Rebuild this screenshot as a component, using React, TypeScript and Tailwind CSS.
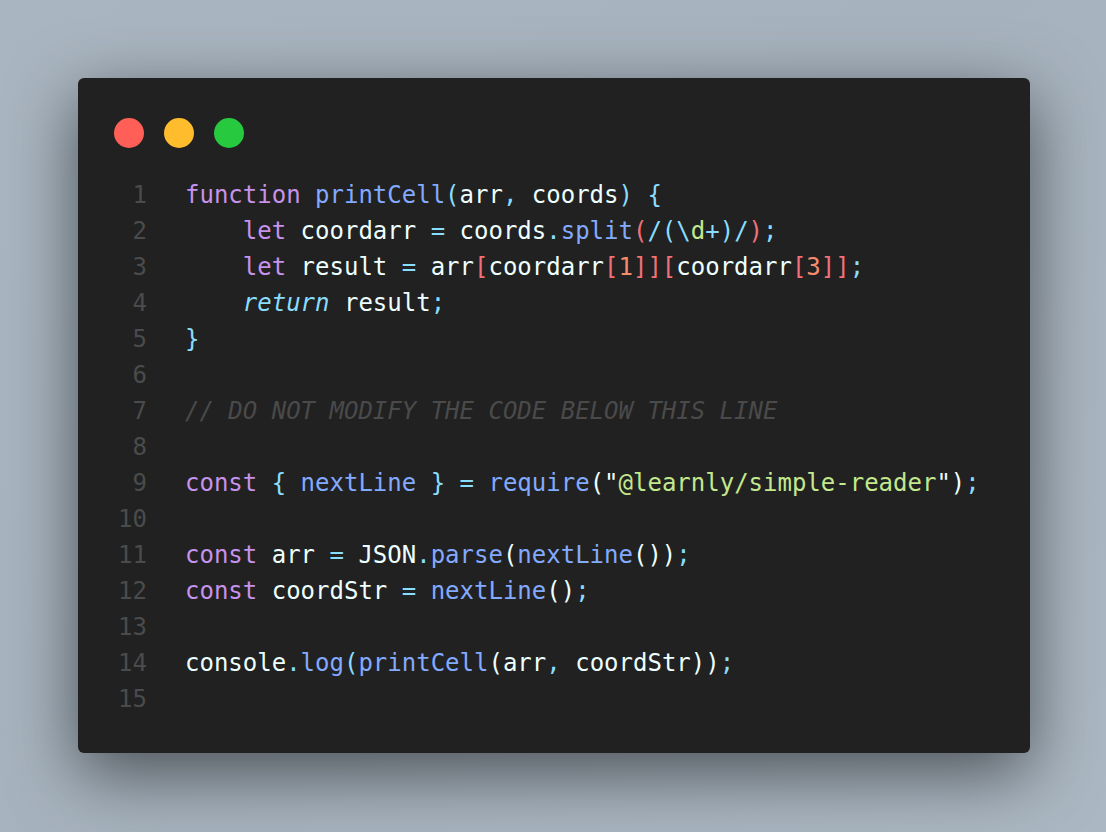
type Tok = [string, string];

const P = "text-[#c792ea]";
const B = "text-[#82aaff]";
const C = "text-[#89ddff]";
const W = "text-[#eeffff]";
const R = "text-[#f07178]";
const O = "text-[#f78c6c]";
const G = "text-[#c3e88d]";
const I = "text-[#89ddff] italic";
const M = "text-[#4a4a4a] italic";

const lines: Tok[][] = [
    [["function", P], [" ", W], ["printCell", B], ["(", C], ["arr", W], [",", C], [" coords", W], [")", C], [" ", W], ["{", C]],
    [["    ", W], ["let", P], [" coordarr ", W], ["=", C], [" coords", W], [".", C], ["split", B], ["(", R], ["/(\\", C], ["d", G], ["+)/", C], [")", R], [";", C]],
    [["    ", W], ["let", P], [" result ", W], ["=", C], [" arr", W], ["[", R], ["coordarr", W], ["[", R], ["1", O], ["]]", R], ["[", R], ["coordarr", W], ["[", R], ["3", O], ["]]", R], [";", C]],
    [["    ", W], ["return", I], [" result", W], [";", C]],
    [["}", C]],
    [],
    [["// DO NOT MODIFY THE CODE BELOW THIS LINE", M]],
    [],
    [["const", P], [" ", W], ["{", C], [" nextLine ", B], ["}", C], [" ", W], ["=", C], [" ", W], ["require", B], ["(\"", W], ["@learnly/simple-reader", G], ["\")", W], [";", C]],
    [],
    [["const", P], [" arr ", W], ["=", C], [" JSON", W], [".", C], ["parse", B], ["(", W], ["nextLine", B], ["())", W], [";", C]],
    [["const", P], [" coordStr ", W], ["=", C], [" ", W], ["nextLine", B], ["()", W], [";", C]],
    [],
    [["console", W], [".", C], ["log", B], ["(", C], ["printCell", B], ["(", W], ["arr", W], [",", C], [" coordStr", W], ["))", W], [";", C]],
    [],
];

export default function App() {
    return (
        <div className="min-h-[832px] w-full bg-[linear-gradient(135deg,#a9b5c0_0%,#a6b2bd_50%,#abb7c2_100%)] pl-[78px] pt-[78px]">
            <div className="h-[675px] w-[952px] rounded-[6px] bg-[#212121] pl-[36px] pt-[40px] shadow-[0_20px_68px_rgba(0,0,0,0.55)]">
                <div className="flex gap-[20px]">
                    <div className="h-[30px] w-[30px] rounded-full bg-[#ff5f56]" />
                    <div className="h-[30px] w-[30px] rounded-full bg-[#ffbd2e]" />
                    <div className="h-[30px] w-[30px] rounded-full bg-[#27c93f]" />
                </div>
                <div className="mt-[29px] flex font-['DejaVu_Sans_Mono',monospace] text-[24px] leading-[36px]">
                    <div className="flex w-[33px] flex-col items-end text-[#4b4b4b]">
                        {lines.map((_, i) => (
                            <span key={i}>{i + 1}</span>
                        ))}
                    </div>
                    <div className="ml-[38px] flex flex-col whitespace-pre">
                        {lines.map((toks, i) => (
                            <div key={i} className="h-[36px]">
                                {toks.map(([t, c], j) => (
                                    <span key={j} className={c}>{t}</span>
                                ))}
                            </div>
                        ))}
                    </div>
                </div>
            </div>
        </div>
    );
}
